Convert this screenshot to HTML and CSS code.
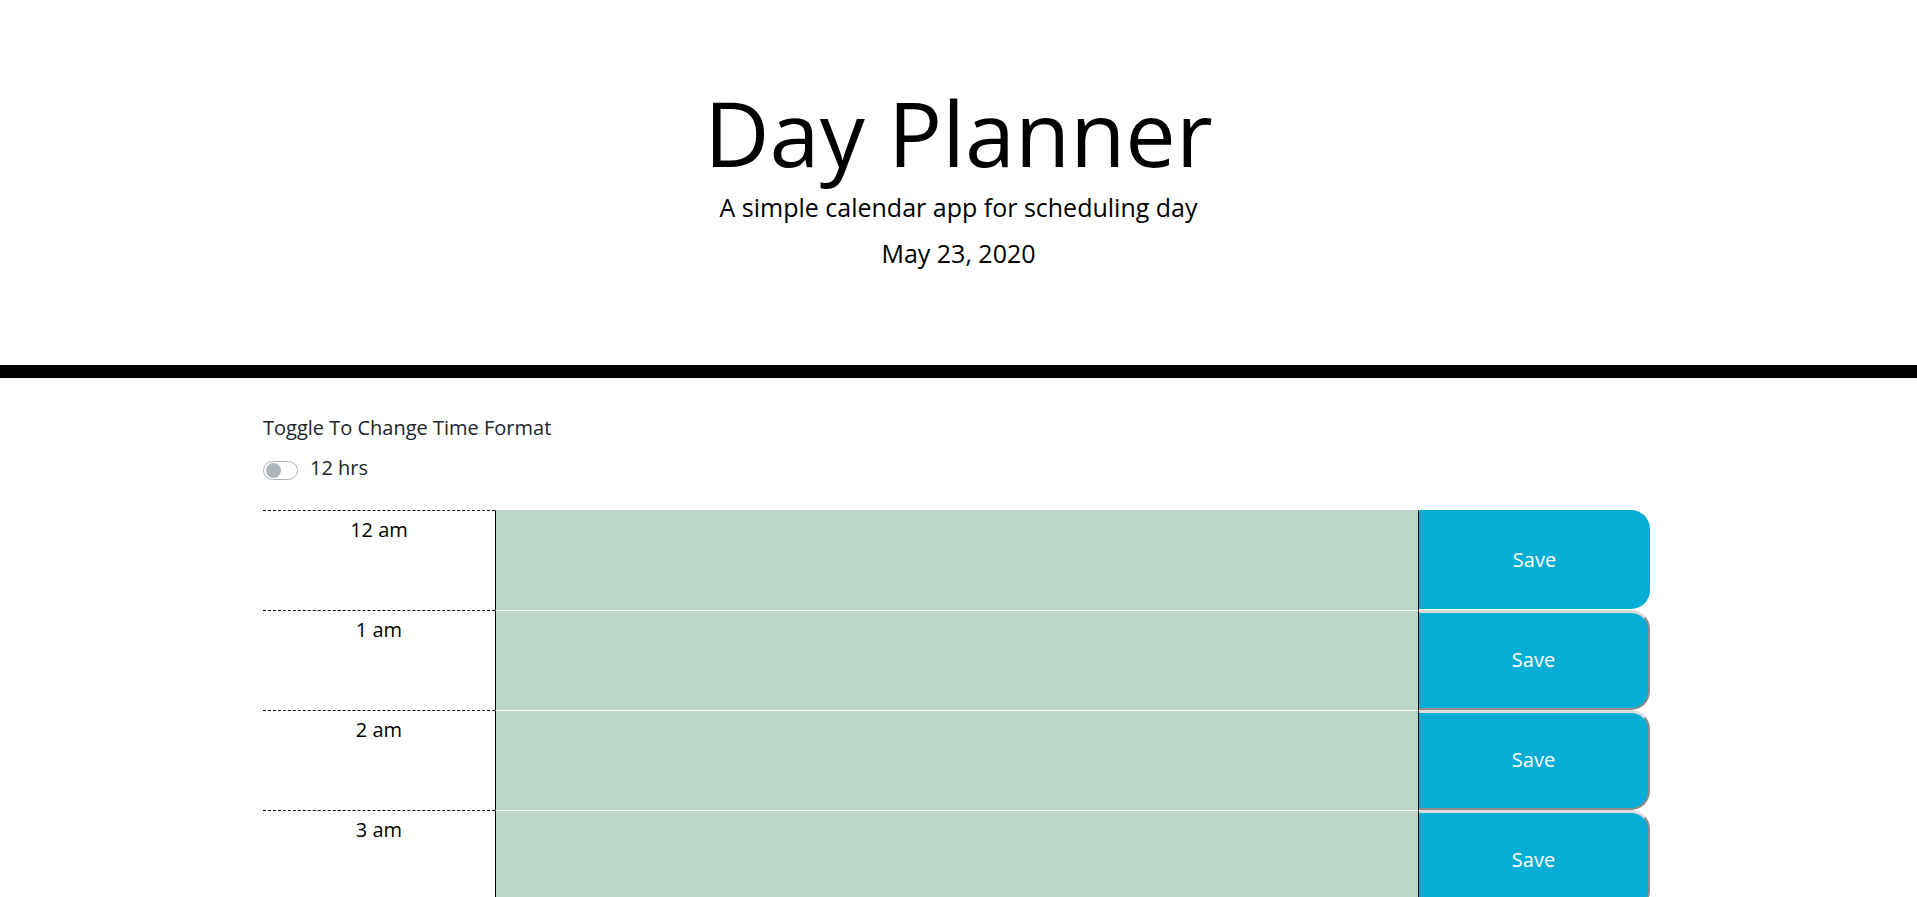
FILE: index.html
```html
<!DOCTYPE html>
<html lang="en">
<head>
<meta charset="utf-8">
<title>Day Planner</title>
<link rel="stylesheet" href="styles.css">
</head>
<body>
<header class="jumbotron">
  <h1 class="title">Day Planner</h1>
  <p class="lead">A simple calendar app for scheduling day</p>
  <p class="current-day">May 23, 2020</p>
</header>
<main class="container">
  <p class="toggle-title">Toggle To Change Time Format</p>
  <label class="switch-row">
    <span class="switch"><span class="knob"></span></span>
    <span class="switch-label">12 hrs</span>
  </label>
  <section class="planner">
    <div class="time-row first"><div class="hour">12 am</div><textarea class="description"></textarea><button class="save-btn">Save</button></div>
    <div class="time-row"><div class="hour">1 am</div><textarea class="description"></textarea><button class="save-btn">Save</button></div>
    <div class="time-row"><div class="hour">2 am</div><textarea class="description"></textarea><button class="save-btn">Save</button></div>
    <div class="time-row"><div class="hour">3 am</div><textarea class="description"></textarea><button class="save-btn">Save</button></div>
    <div class="time-row"><div class="hour">4 am</div><textarea class="description"></textarea><button class="save-btn">Save</button></div>
    <div class="time-row"><div class="hour">5 am</div><textarea class="description"></textarea><button class="save-btn">Save</button></div>
    <div class="time-row"><div class="hour">6 am</div><textarea class="description"></textarea><button class="save-btn">Save</button></div>
    <div class="time-row"><div class="hour">7 am</div><textarea class="description"></textarea><button class="save-btn">Save</button></div>
    <div class="time-row"><div class="hour">8 am</div><textarea class="description"></textarea><button class="save-btn">Save</button></div>
    <div class="time-row"><div class="hour">9 am</div><textarea class="description"></textarea><button class="save-btn">Save</button></div>
    <div class="time-row"><div class="hour">10 am</div><textarea class="description"></textarea><button class="save-btn">Save</button></div>
    <div class="time-row"><div class="hour">11 am</div><textarea class="description"></textarea><button class="save-btn">Save</button></div>
    <div class="time-row"><div class="hour">12 pm</div><textarea class="description"></textarea><button class="save-btn">Save</button></div>
    <div class="time-row"><div class="hour">1 pm</div><textarea class="description"></textarea><button class="save-btn">Save</button></div>
    <div class="time-row"><div class="hour">2 pm</div><textarea class="description"></textarea><button class="save-btn">Save</button></div>
    <div class="time-row"><div class="hour">3 pm</div><textarea class="description"></textarea><button class="save-btn">Save</button></div>
    <div class="time-row"><div class="hour">4 pm</div><textarea class="description"></textarea><button class="save-btn">Save</button></div>
    <div class="time-row"><div class="hour">5 pm</div><textarea class="description"></textarea><button class="save-btn">Save</button></div>
    <div class="time-row"><div class="hour">6 pm</div><textarea class="description"></textarea><button class="save-btn">Save</button></div>
    <div class="time-row"><div class="hour">7 pm</div><textarea class="description"></textarea><button class="save-btn">Save</button></div>
    <div class="time-row"><div class="hour">8 pm</div><textarea class="description"></textarea><button class="save-btn">Save</button></div>
    <div class="time-row"><div class="hour">9 pm</div><textarea class="description"></textarea><button class="save-btn">Save</button></div>
    <div class="time-row"><div class="hour">10 pm</div><textarea class="description"></textarea><button class="save-btn">Save</button></div>
    <div class="time-row"><div class="hour">11 pm</div><textarea class="description"></textarea><button class="save-btn">Save</button></div>
  </section>
</main>
</body>
</html>
```

FILE: styles.css
```css
html, body {
  margin: 0;
  padding: 0;
  background: #ffffff;
}

body {
  font-family: "Open Sans", "Liberation Sans", sans-serif;
  font-size: 20px;
  line-height: 1.5;
  color: #212529;
}

.jumbotron {
  text-align: center;
  padding: 78px 0 93px;
  border-bottom: 13px solid #000000;
  color: #000000;
}

.title {
  margin: 0;
  font-size: 90px;
  font-weight: 400;
  line-height: 108px;
}

.lead {
  margin: 3px 0 0;
  font-size: 25px;
  line-height: 37.5px;
}

.current-day {
  margin: 8px 0 0;
  font-size: 25px;
  line-height: 37.5px;
}

.container {
  width: 1387px;
  padding-right: 4px;
  margin: 0 auto;
  padding-top: 35px;
}

.toggle-title {
  margin: 0;
  line-height: 30px;
}

.switch-row {
  display: flex;
  align-items: center;
  gap: 12px;
  margin-top: 10px;
  height: 30px;
  color: #212529;
}

.switch {
  box-sizing: border-box;
  width: 35px;
  height: 19px;
  border: 1px solid #adb5bd;
  border-radius: 10px;
  display: flex;
  align-items: center;
  padding-left: 2px;
  margin-top: 4px;
}

.knob {
  width: 15px;
  height: 15px;
  border-radius: 50%;
  background: #adb5bd;
}

.planner {
  margin-top: 27px;
}

.time-row {
  display: grid;
  grid-template-columns: 232px 924px 231px;
  height: 100px;
}

.hour {
  border-top: 1px dashed #000000;
  text-align: center;
  padding-top: 4px;
  color: #000000;
  font-size: 20px;
  line-height: 30px;
}

.description {
  box-sizing: border-box;
  height: 100px;
  margin: 0;
  padding: 10px;
  resize: none;
  background: #bcd6c8;
  border: none;
  border-top: 1px solid #ffffff;
  border-left: 1px solid #000000;
  border-right: 1px solid #000000;
  font-family: "Open Sans", "Liberation Sans", sans-serif;
  font-size: 20px;
  color: #000000;
}

.save-btn {
  box-sizing: border-box;
  height: 100px;
  margin: 0;
  padding: 0 0 2px;
  background: #06aed5;
  color: #ffffff;
  font-family: "Open Sans", "Liberation Sans", sans-serif;
  font-size: 20px;
  border: none;
  border-top: 3px solid #dcdcdc;
  border-right: 2px solid #8c8c8c;
  border-bottom: 2px solid #8c8c8c;
  border-radius: 0 19px 19px 0;
}

.first .save-btn {
  border: none;
  height: 99px;
  padding: 0 0 1px;
}

.first .description {
  border-top-color: #bcd6c8;
}
```
